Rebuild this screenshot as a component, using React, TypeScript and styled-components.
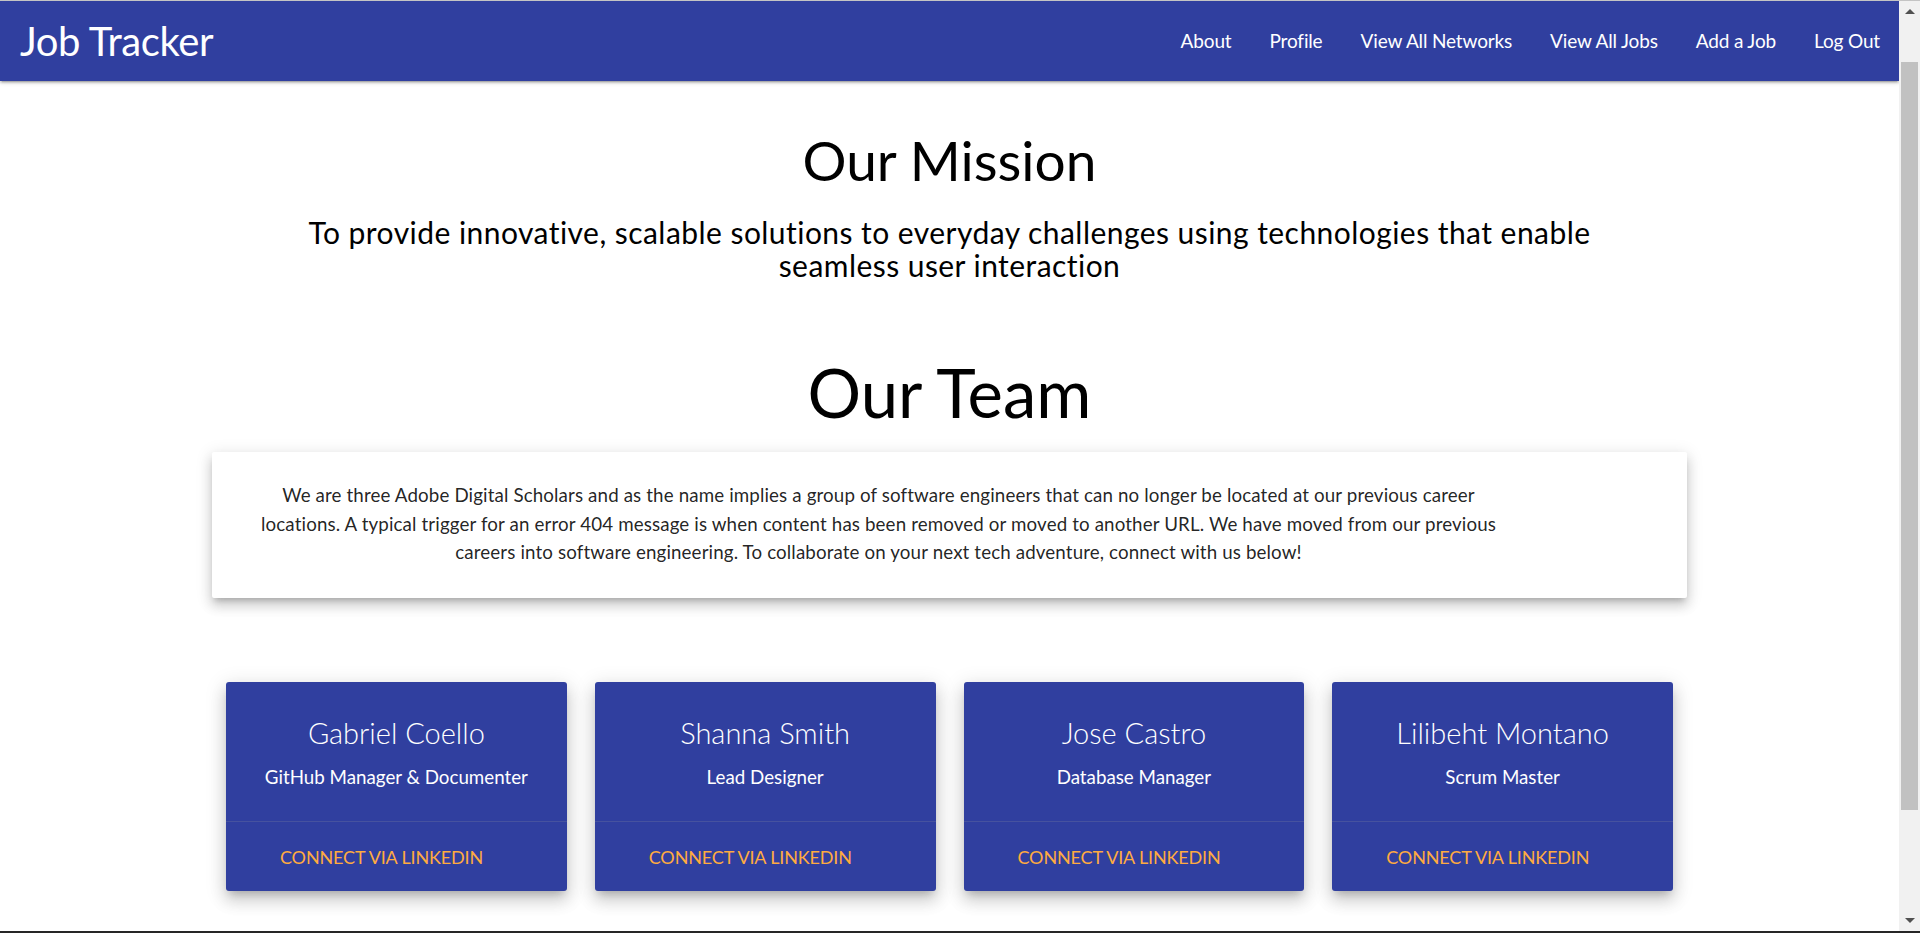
import React from "react";
import styled, { createGlobalStyle } from "styled-components";

const GlobalStyle = createGlobalStyle`
  html, body {
    margin: 0;
    padding: 0;
    height: 100%;
    overflow: hidden;
    background: #ffffff;
  }
  body {
    font-family: Lato, "Liberation Sans", sans-serif;
    color: #000;
  }
  *, *::before, *::after { box-sizing: border-box; }
`;

const Frame = styled.div`
  height: 100vh;
  display: flex;
  flex-direction: column;
  border-top: 1px solid #c4c4c4;
  border-bottom: 2px solid #262626;
`;

const Viewport = styled.div`
  flex: 1;
  display: flex;
  min-height: 0;
`;

const Page = styled.div`
  flex: 1;
  min-width: 0;
  overflow: hidden;
  background: #fff;
`;

const Nav = styled.nav`
  height: 80px;
  background: #303f9f;
  display: flex;
  align-items: center;
  justify-content: space-between;
  padding-left: 20px;
  position: relative;
  z-index: 1;
  box-shadow: 0 2px 2px 0 rgba(0, 0, 0, 0.14), 0 3px 1px -2px rgba(0, 0, 0, 0.12),
    0 1px 5px 0 rgba(0, 0, 0, 0.2);
`;

const Brand = styled.a`
  color: #fff;
  font-size: 40px;
  letter-spacing: -0.4px;
  line-height: 80px;
  text-decoration: none;
`;

const NavList = styled.ul`
  display: flex;
  list-style: none;
  margin: 0;
  padding: 0;
`;

const NavLink = styled.a`
  display: block;
  padding: 0 19px;
  color: #fff;
  font-size: 19px;
  letter-spacing: -0.15px;
  line-height: 80px;
  text-decoration: none;
`;

const Main = styled.main`
  display: flex;
  flex-direction: column;
  align-items: center;
`;

const MissionTitle = styled.h3`
  margin: 49px 0 0;
  font-size: 55px;
  font-weight: 400;
  line-height: 1.1;
  text-align: center;
`;

const MissionText = styled.h5`
  margin: 25px 0 0;
  max-width: 1340px;
  font-size: 30px;
  font-weight: 400;
  letter-spacing: 0.45px;
  line-height: 33.5px;
  text-align: center;
`;

const TeamTitle = styled.h2`
  margin: 73px 0 0;
  font-size: 67px;
  font-weight: 400;
  line-height: 1.1;
  text-align: center;
`;

const Container = styled.div`
  width: 1475px;
`;

const IntroCard = styled.div`
  margin-top: 23px;
  background: #fff;
  border-radius: 2px;
  padding: 29px 30px 31px;
  box-shadow: 0 8px 12px 1px rgba(0, 0, 0, 0.12), 0 3px 16px 2px rgba(0, 0, 0, 0.1),
    0 5px 6px -3px rgba(0, 0, 0, 0.2);
`;

const IntroText = styled.p`
  width: 1273px;
  margin: 0;
  font-size: 18.75px;
  letter-spacing: 0.12px;
  line-height: 28.5px;
  text-align: center;
  color: rgba(0, 0, 0, 0.87);
`;

const TeamGrid = styled.div`
  margin-top: 84px;
  padding: 0 14px;
  display: grid;
  grid-template-columns: repeat(4, 1fr);
  gap: 28px;
`;

const MemberCard = styled.div`
  background: #303f9f;
  color: #fff;
  border-radius: 3px;
  box-shadow: 0 10px 16px 1px rgba(0, 0, 0, 0.12), 0 4px 20px 3px rgba(0, 0, 0, 0.1),
    0 6px 8px -4px rgba(0, 0, 0, 0.2);
`;

const CardBody = styled.div`
  padding: 31px 30px 30px;
  text-align: center;
`;

const MemberName = styled.span`
  display: block;
  font-size: 29px;
  font-weight: 300;
  line-height: 40px;
`;

const MemberRole = styled.p`
  margin: 10px 0 0;
  font-size: 18.75px;
  line-height: 28px;
`;

const CardAction = styled.div`
  border-top: 1px solid rgba(160, 160, 160, 0.2);
  padding: 21px 30px 19px 54px;
`;

const ActionLink = styled.a`
  color: #ffab40;
  font-size: 18px;
  letter-spacing: -0.15px;
  line-height: 29px;
  text-transform: uppercase;
  text-decoration: none;
`;

const Scrollbar = styled.div`
  width: 21px;
  background: #f1f1f1;
  display: flex;
  flex-direction: column;
  align-items: center;
`;

const ArrowButton = styled.div<{ $down?: boolean }>`
  height: 21px;
  width: 100%;
  display: flex;
  align-items: center;
  justify-content: center;
  &::before {
    content: "";
    border-left: 5px solid transparent;
    border-right: 5px solid transparent;
    ${(p) =>
      p.$down ? "border-top: 5px solid #505050;" : "border-bottom: 5px solid #505050;"}
  }
`;

const Thumb = styled.div`
  margin-top: 40px;
  width: 17px;
  height: 748px;
  background: #c1c1c1;
`;

const Track = styled.div`
  flex: 1;
`;

const links = ["About", "Profile", "View All Networks", "View All Jobs", "Add a Job", "Log Out"];

const team = [
  { name: "Gabriel Coello", role: "GitHub Manager & Documenter" },
  { name: "Shanna Smith", role: "Lead Designer" },
  { name: "Jose Castro", role: "Database Manager" },
  { name: "Lilibeht Montano", role: "Scrum Master" },
];

export default function App() {
  return (
    <>
      <GlobalStyle />
      <Frame>
        <Viewport>
          <Page>
            <Nav>
              <Brand href="#">Job Tracker</Brand>
              <NavList>
                {links.map((l) => (
                  <li key={l}>
                    <NavLink href="#">{l}</NavLink>
                  </li>
                ))}
              </NavList>
            </Nav>
            <Main>
              <MissionTitle>Our Mission</MissionTitle>
              <MissionText>
                To provide innovative, scalable solutions to everyday challenges using technologies
                that enable seamless user interaction
              </MissionText>
              <TeamTitle>Our Team</TeamTitle>
              <Container>
                <IntroCard>
                  <IntroText>
                    We are three Adobe Digital Scholars and as the name implies a group of software
                    engineers that can no longer be located at our previous career
                    <br />
                    locations. A typical trigger for an error 404 message is when content has been
                    removed or moved to another URL. We have moved from our previous
                    <br />
                    careers into software engineering. To collaborate on your next tech adventure,
                    connect with us below!
                  </IntroText>
                </IntroCard>
                <TeamGrid>
                  {team.map((m) => (
                    <MemberCard key={m.name}>
                      <CardBody>
                        <MemberName>{m.name}</MemberName>
                        <MemberRole>{m.role}</MemberRole>
                      </CardBody>
                      <CardAction>
                        <ActionLink href="#">Connect via LinkedIn</ActionLink>
                      </CardAction>
                    </MemberCard>
                  ))}
                </TeamGrid>
              </Container>
            </Main>
          </Page>
          <Scrollbar>
            <ArrowButton />
            <Thumb />
            <Track />
            <ArrowButton $down />
          </Scrollbar>
        </Viewport>
      </Frame>
    </>
  );
}
